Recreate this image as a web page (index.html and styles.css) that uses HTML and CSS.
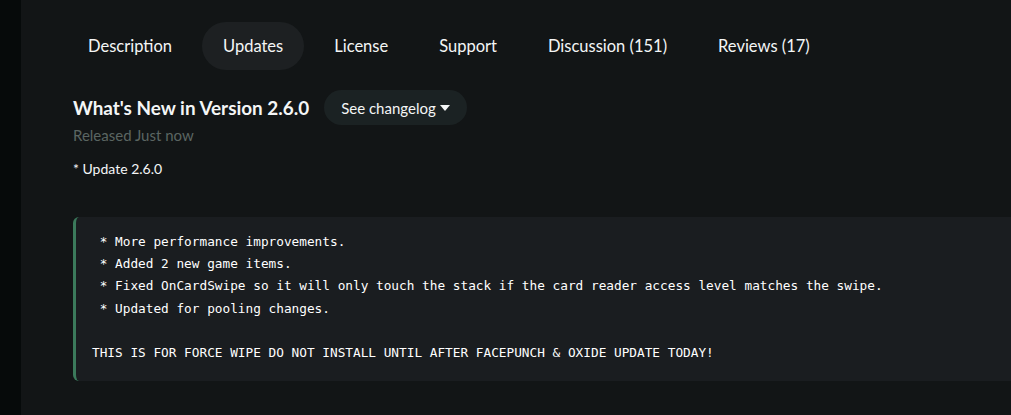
FILE: index.html
```html
<!DOCTYPE html>
<html lang="en">
<head>
    <meta charset="UTF-8">
    <meta name="viewport" content="width=device-width, initial-scale=1.0">
    <title>Updates</title>
    <link rel="stylesheet" href="styles.css">
</head>
<body>
    <div class="side"></div>
    <div class="main">
        <nav class="tabs">
            <a class="tab">Description</a>
            <a class="tab active">Updates</a>
            <a class="tab">License</a>
            <a class="tab">Support</a>
            <a class="tab">Discussion (151)</a>
            <a class="tab">Reviews (17)</a>
        </nav>

        <div class="update-head">
            <h2>What's New in Version 2.6.0</h2>
            <button class="changelog">See changelog <span class="caret"></span></button>
        </div>
        <p class="released">Released Just now</p>
        <p class="summary">* Update 2.6.0</p>

        <pre class="notes"> * More performance improvements.
 * Added 2 new game items.
 * Fixed OnCardSwipe so it will only touch the stack if the card reader access level matches the swipe.
 * Updated for pooling changes.

THIS IS FOR FORCE WIPE DO NOT INSTALL UNTIL AFTER FACEPUNCH &amp; OXIDE UPDATE TODAY!</pre>
    </div>
</body>
</html>
```

FILE: styles.css
```css
body {
  margin: 0;
  height: 415px;
  display: flex;
  background-color: #121516;
  color: #f4f6f6;
  font-family: Lato, "Noto Sans", sans-serif;
  overflow: hidden;
}

.side {
  width: 21px;
  flex-shrink: 0;
  background-color: #060a0a;
}

.main {
  flex: 1;
  padding: 22px 0 0 52px;
  overflow: hidden;
}

.tabs {
  display: flex;
  gap: 9px;
  margin-left: -6px;
}

.tab {
  height: 48px;
  padding: 0 21px;
  border-radius: 24px;
  display: flex;
  align-items: center;
  font-size: 16.5px;
}

.tab.active {
  background-color: #1d2022;
}

.update-head {
  display: flex;
  align-items: center;
  gap: 15px;
  margin-top: 20px;
}

.update-head h2 {
  margin: 0;
  font-size: 18.9px;
  font-weight: 700;
}

.changelog {
  height: 35px;
  padding: 0 17px;
  border: none;
  border-radius: 18px;
  background-color: #1b2223;
  color: #f4f6f6;
  font-family: inherit;
  font-size: 15px;
  display: flex;
  align-items: center;
  gap: 4px;
}

.caret {
  width: 0;
  height: 0;
  border-left: 5px solid transparent;
  border-right: 5px solid transparent;
  border-top: 6px solid #f4f6f6;
}

.released {
  margin: 0;
  line-height: 20px;
  font-size: 15px;
  color: #5b6562;
}

.summary {
  margin: 14px 0 0;
  line-height: 20px;
  font-size: 14px;
}

.notes {
  margin: 38px -20px 0 0;
  padding: 14px 16px 17px;
  border-left: 3px solid #3b7a5b;
  border-radius: 6px;
  background-color: #1a1d20;
  color: #ffffff;
  font-family: "DejaVu Sans Mono", monospace;
  font-size: 12.75px;
  line-height: 22.2px;
}
```
